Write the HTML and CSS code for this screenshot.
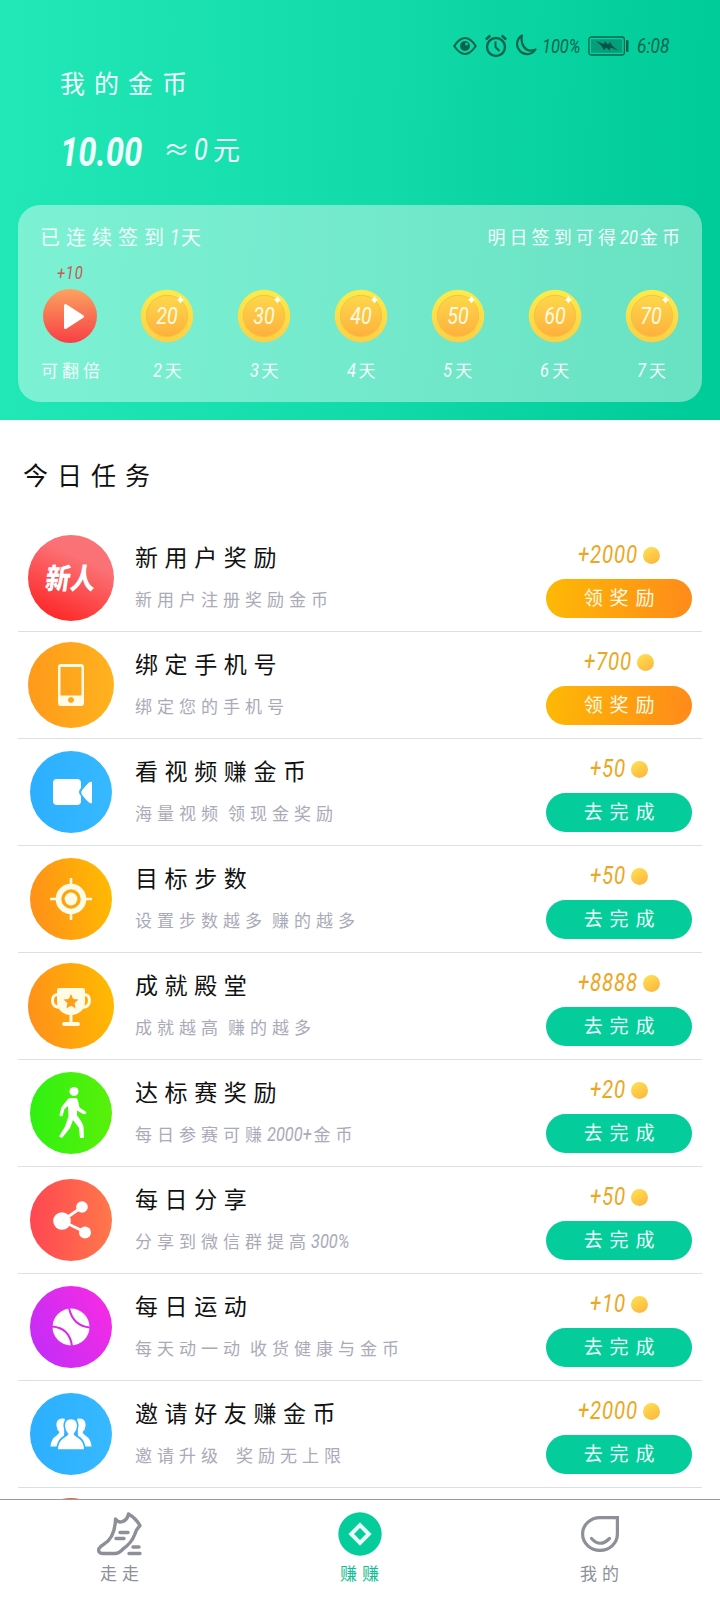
FILE: index.html
```html
<!DOCTYPE html>
<html lang="zh-CN">
<head>
<meta charset="utf-8">
<title>我的金币</title>
<link rel="stylesheet" href="styles.css">
</head>
<body>
<div class="app">
  <svg class="defs" width="0" height="0" aria-hidden="true">
    <defs>
      <linearGradient id="rim" x1="0" y1="0" x2="0" y2="1"><stop offset="0" stop-color="#fbec4a"/><stop offset="1" stop-color="#fdcf47"/></linearGradient>
      <linearGradient id="face" x1="0" y1="0" x2="0" y2="1"><stop offset="0" stop-color="#fdd84b"/><stop offset="1" stop-color="#fdb03d"/></linearGradient>
      <symbol id="coin" viewBox="0 0 54 54">
        <circle cx="27" cy="27" r="26.3" fill="url(#rim)"/>
        <circle cx="27" cy="27" r="20.7" fill="url(#face)" stroke="#f8c23e" stroke-width="1"/>
        <path d="M40.500 7.500q.7 2.600 3 3.300-2.300.7-3 3.300-.7-2.600-3-3.300 2.300-.7 3-3.300z" fill="#fff" stroke="#fff" stroke-width=".8"/>
      </symbol>
    </defs>
  </svg>
  <header class="hero">
    <div class="status">
      <svg class="eye" width="24" height="18" viewBox="0 0 24 18"><path d="M1.200 9Q12-7 22.800 9 12 25 1.200 9z" fill="none" stroke="currentColor" stroke-width="2"/><circle cx="12" cy="9" r="5" fill="currentColor"/><circle cx="13.500" cy="7" r="1.500" fill="#09c493"/></svg>
      <svg class="alarm" width="22" height="24" viewBox="0 0 22 24" fill="none" stroke="currentColor"><circle cx="11" cy="13" r="9" stroke-width="2.400"/><path d="M10.500 7.500V13l4 4" stroke-width="2"/><path d="M.8 5.500 5.300 1.500M21.200 5.500l-4.500-4" stroke-width="2.400"/></svg>
      <svg class="moon" width="23" height="23" viewBox="0 0 23 23"><path d="M8 1.500A10 10 0 1 0 21.500 15.500Q14 18.500 10 13 6.500 8 8 1.500z" fill="none" stroke="currentColor" stroke-width="2.200" stroke-linejoin="round"/></svg>
      <span class="pct"><span class="num">100%</span></span>
      <svg class="battery" width="41" height="20" viewBox="0 0 41 20"><rect x=".9" y="1" width="35.500" height="18" rx="2.500" fill="none" stroke="currentColor" stroke-width="1.300"/><rect x="3" y="3.200" width="31.300" height="13.600" fill="#068e70" opacity=".75"/><path d="M8 5l8 3 1-2.500 3 3 2-2.500 2 3.500 6 5-7.500-3-1 3-3-3-2.500 2.500-2.500-4z" fill="#075446"/><rect x="38" y="4" width="2.500" height="12" rx="1" fill="currentColor"/></svg>
      <span class="time"><span class="num">6:08</span></span>
    </div>
    <h1 class="heading">我的金币</h1>
    <div class="balance"><div class="amount"><strong class="num">10.00</strong></div><div class="worth">≈<span class="num n1">0</span>元</div></div>
    <section class="checkin">
      <div class="checkin-top"><span class="streak">已连续签到<i class="num n1">1</i>天</span><span class="tomorrow">明日签到可得<i class="num n2">20</i>金币</span></div>
      <div class="days">
        <div class="day"><span class="bonus"><span class="num">+10</span></span>
          <svg class="play" width="54" height="54" viewBox="0 0 54 54"><defs><linearGradient id="pg" x1="0" y1="0" x2="0" y2="1"><stop offset="0" stop-color="#fba35f"/><stop offset="1" stop-color="#f83f45"/></linearGradient></defs><circle cx="27" cy="27" r="27" fill="url(#pg)"/><path d="M22.500 16.500v22l17-11z" fill="#fff" stroke="#fff" stroke-width="3" stroke-linejoin="round"/></svg>
          <span class="day-label wide">可翻倍</span></div>
        <div class="day"><span class="bonus"></span><div class="coin"><svg width="54" height="54"><use href="#coin"/></svg><b class="num">20</b></div><span class="day-label"><i class="num n1">2</i>天</span></div>
        <div class="day"><span class="bonus"></span><div class="coin"><svg width="54" height="54"><use href="#coin"/></svg><b class="num">30</b></div><span class="day-label"><i class="num n1">3</i>天</span></div>
        <div class="day"><span class="bonus"></span><div class="coin"><svg width="54" height="54"><use href="#coin"/></svg><b class="num">40</b></div><span class="day-label"><i class="num n1">4</i>天</span></div>
        <div class="day"><span class="bonus"></span><div class="coin"><svg width="54" height="54"><use href="#coin"/></svg><b class="num">50</b></div><span class="day-label"><i class="num n1">5</i>天</span></div>
        <div class="day"><span class="bonus"></span><div class="coin"><svg width="54" height="54"><use href="#coin"/></svg><b class="num">60</b></div><span class="day-label"><i class="num n1">6</i>天</span></div>
        <div class="day"><span class="bonus"></span><div class="coin"><svg width="54" height="54"><use href="#coin"/></svg><b class="num">70</b></div><span class="day-label"><i class="num n1">7</i>天</span></div>
      </div>
    </section>
  </header>

  <main class="tasks">
    <h2 class="section-title">今日任务</h2>
    <div class="list">
      <article class="task">
        <div class="badge large red"><span class="newbie">新人</span></div>
        <div class="info"><h3>新用户奖励</h3><p>新用户注册奖励金币</p></div>
        <div class="action"><div class="reward"><span class="num n5">+2000</span><i class="dot"></i></div><button class="btn claim">领奖励</button></div>
      </article>
      <article class="task">
        <div class="badge large amber"><svg width="26" height="42" viewBox="0 0 26 42"><path fill-rule="evenodd" d="M3 0h20a3 3 0 0 1 3 3v36a3 3 0 0 1-3 3H3a3 3 0 0 1-3-3V3a3 3 0 0 1 3-3zM2.500 3v28.500h21V3zM13 33a3 3 0 1 0 .01 0z" fill="#fffbe6"/></svg></div>
        <div class="info"><h3>绑定手机号</h3><p>绑定您的手机号</p></div>
        <div class="action"><div class="reward"><span class="num n4">+700</span><i class="dot"></i></div><button class="btn claim">领奖励</button></div>
      </article>
      <article class="task">
        <div class="badge blue"><svg class="camera" width="40" height="26" viewBox="0 0 40 26" fill="#fff"><path d="M4 0h20q4 0 4 4v5q-4 4 0 8v5q0 4-4 4H4q-4 0-4-4V4q0-4 4-4z"/><path d="M39 3v21q-1.500.7-3-.5-3-2.500-6-6.500-3.500-3.500 0-7 3-3.500 6-6.500 1.500-1.200 3-.5z"/></svg></div>
        <div class="info"><h3>看视频赚金币</h3><p>海量视频<i class="gap"></i>领现金奖励</p></div>
        <div class="action"><div class="reward"><span class="num n3">+50</span><i class="dot"></i></div><button class="btn">去完成</button></div>
      </article>
      <article class="task">
        <div class="badge orange"><svg width="42" height="42" viewBox="0 0 42 42"><circle cx="21" cy="21" r="12.500" fill="none" stroke="#fffbe6" stroke-width="5.600"/><circle cx="21" cy="21" r="6.400" fill="#fffbe6"/><path d="M21 1v6M21 35v6M1 21h6M35 21h6" stroke="#fffbe6" stroke-width="2.600" stroke-linecap="round"/></svg></div>
        <div class="info"><h3>目标步数</h3><p>设置步数越多<i class="gap"></i>赚的越多</p></div>
        <div class="action"><div class="reward"><span class="num n3">+50</span><i class="dot"></i></div><button class="btn">去完成</button></div>
      </article>
      <article class="task">
        <div class="badge large orange"><svg class="trophy" width="40" height="40" viewBox="0 0 40 40"><path d="M8 0h24q2 0 2 2v12c0 7-5 12-12.500 13v7H27q2 0 2 2t-2 2H13q-2 0-2-2t2-2h5.500v-7C11 26 6 21 6 14V2q0-2 2-2z" fill="#fffbe6"/><path d="M8 6.500Q1.500 6 1.500 12.500T9 19.500M32 6.500q6.500-.5 6.500 6T31 19.500" fill="none" stroke="#fffbe6" stroke-width="3"/><path d="M20 6l2.200 4.900 5.300.6-3.900 3.600 1 5.200-4.600-2.600-4.600 2.600 1-5.200-3.900-3.600 5.300-.6z" fill="#ff9d14"/></svg></div>
        <div class="info"><h3>成就殿堂</h3><p>成就越高<i class="gap"></i>赚的越多</p></div>
        <div class="action"><div class="reward"><span class="num n5">+8888</span><i class="dot"></i></div><button class="btn">去完成</button></div>
      </article>
      <article class="task">
        <div class="badge green"><svg class="walker" width="28" height="52" viewBox="0 0 28 52"><circle cx="15" cy="4.500" r="4.500" fill="#fff"/><path d="M8.500 12.500q1-1.500 3-1.500h5q2 0 2.500 2.500l1.500 7 6 4q1.500 1 .5 2t-3 .5L18 23.500v5q5 6 6.500 11l.5 11.500h-4L20 41l-6-8-3 8-8 10-3-1.500 6-10L9.500 29l-.5-10-3.500 3-2 7q-3 1-3-1l2-8z" fill="#fff"/></svg></div>
        <div class="info"><h3>达标赛奖励</h3><p>每日参赛可赚<i class="num n5">2000+</i>金币</p></div>
        <div class="action"><div class="reward"><span class="num n3">+20</span><i class="dot"></i></div><button class="btn">去完成</button></div>
      </article>
      <article class="task">
        <div class="badge coral"><svg class="share" width="38" height="38" viewBox="0 0 38 38"><path d="M29 6 9 20l23 11" fill="none" stroke="#fff" stroke-width="2.800"/><circle cx="9" cy="20" r="8.800" fill="#fff"/><circle cx="29" cy="6" r="5.800" fill="#fff"/><circle cx="32" cy="31.500" r="6" fill="#fff"/></svg></div>
        <div class="info"><h3>每日分享</h3><p>分享到微信群提高<i class="num n4">300%</i></p></div>
        <div class="action"><div class="reward"><span class="num n3">+50</span><i class="dot"></i></div><button class="btn">去完成</button></div>
      </article>
      <article class="task">
        <div class="badge purple"><svg width="38" height="38" viewBox="0 0 38 38"><circle cx="19" cy="19" r="18.500" fill="#fff"/><path d="M17 0q4 18 21 19.500M0 18.500q18 1.500 20 20" fill="none" stroke="#d82be9" stroke-width="2"/></svg></div>
        <div class="info"><h3>每日运动</h3><p>每天动一动<i class="gap"></i>收货健康与金币</p></div>
        <div class="action"><div class="reward"><span class="num n3">+10</span><i class="dot"></i></div><button class="btn">去完成</button></div>
      </article>
      <article class="task">
        <div class="badge blue"><svg width="42" height="32" viewBox="0 0 42 32" fill="#fff"><path d="M15 1C8-1 6 4 6.500 8q.5 4 3 6-.5 2-3.500 4Q1 21 .5 28.500h7Q8 21 14 18z"/><path d="M27 1c7-2 9 3 8.500 7q-.5 4-3 6 .5 2 3.500 4 5 3 5.500 10.500h-7Q34 21 28 18z"/><path d="M21 .5c5.500 0 7 4 6.700 8-.2 3.500-1.700 6-3.200 7.500.5 1.500 2 2 4.500 3.500Q34.500 23 35 32H7q.5-9 6-12.500c2.500-1.500 4-2 4.500-3.500-1.500-1.500-3-4-3.200-7.500-.3-4 1.200-8 6.700-8z" stroke="#2fb2ff" stroke-width="1.600"/></svg></div>
        <div class="info"><h3>邀请好友赚金币</h3><p>邀请升级<i class="gap double"></i>奖励无上限</p></div>
        <div class="action"><div class="reward"><span class="num n5">+2000</span><i class="dot"></i></div><button class="btn">去完成</button></div>
      </article>
      <article class="task partial"><div class="badge rust"></div></article>
    </div>
  </main>

  <nav class="tabs">
    <a class="tab"><svg class="shoe" width="46" height="44" viewBox="0 0 46 44" fill="none" stroke="currentColor" stroke-width="3.400" stroke-linecap="round" stroke-linejoin="round"><path d="M18.500 7q3 4 7 2.500 4.500-1 6-7.500 7 4 11.500 11.500-4 4-5.500 9.500-3 8-11.500 14-4 4.500-8 4.500H5.500q-5-.5-3.500-5 1-2 4.500-4Q18 26 18.500 7z"/><path d="M23 20.500h8M19 26.500h8M36 35h6M32 41.500h11"/></svg><span>走走</span></a>
    <a class="tab active"><svg width="44" height="44" viewBox="0 0 44 44"><circle cx="22" cy="22" r="21.700" fill="#04cd9b"/><path d="M22 13.200 30.800 22 22 30.800 13.200 22z" fill="none" stroke="#e9fff8" stroke-width="4"/></svg><span>赚赚</span></a>
    <a class="tab"><svg class="face" width="40" height="38" viewBox="0 0 40 38" fill="none" stroke="currentColor" stroke-width="3.200"><path d="M20 2.600h17.400V19A17.400 16.400 0 1 1 20 2.600z"/><path d="M11.500 23.500q8.500 9.500 18 0" stroke-linecap="round"/></svg><span>我的</span></a>
  </nav>
</div>
</body>
</html>
```
FILE: styles.css
```css
* { box-sizing: border-box; }
body { margin: 0; background: #fff; font-family: "Noto Sans CJK SC", sans-serif; font-weight: 400; }
h1, h2, h3, p { margin: 0; font-weight: 400; }
.app { width: 720px; height: 1600px; overflow: hidden; display: flex; flex-direction: column; background: #fff; }
.defs { display: block; flex: none; height: 0; }

/* Condensed slanted numerals; n1-n5 give back the width the condensing frees */
.num { display: inline-block; font-family: Roboto, "Liberation Sans", sans-serif; font-style: italic; font-weight: 400; letter-spacing: 0; line-height: 1; transform: scaleX(.82); transform-origin: 0 50%; }
.n1 { margin-right: -.1em; }
.n2 { margin-right: -.2em; }
.n3 { margin-right: -.3em; }
.n4 { margin-right: -.4em; }
.n5 { margin-right: -.5em; }

/* Header */
.hero { flex: none; height: 420px; padding: 33px 18px 0; color: #f2fffb; background: linear-gradient(92deg, #22e8b7 0%, #15dcab 45%, #00cc99 96%); }
.status { height: 26px; padding-right: 31px; display: flex; align-items: center; justify-content: flex-end; color: #08644f; }
.alarm { margin-left: 8px; margin-top: -1px; }
.moon { margin-left: 7px; margin-top: -1px; }
.pct { width: 41px; margin-left: 5px; font-size: 20px; white-space: nowrap; }
.battery { margin-left: 5px; }
.time { width: 34px; margin-left: 8px; font-size: 21px; }
.status .num { display: block; }
.heading { height: 40px; margin: 4px 0 0 42px; font-size: 25px; line-height: 38px; letter-spacing: 9px; }
.balance { height: 48px; margin: 22px 0 0 42px; display: flex; align-items: center; }
.amount { width: 103px; font-size: 40px; line-height: 46px; }
.amount .num { font-weight: 700; }
.worth { font-size: 27px; line-height: 48px; }
.worth .num { margin-left: 4px; margin-right: 2px; font-size: 31px; }
.checkin { height: 197px; margin-top: 32px; padding: 14px 2px 0 4px; border-radius: 22px; background: rgba(255, 255, 255, .41); }
.checkin-top { height: 34px; padding: 0 20px 0 18px; display: flex; justify-content: space-between; align-items: center; }
.streak { font-size: 20px; letter-spacing: 6px; }
.streak .num { margin-right: -1px; font-size: 22px; }
.tomorrow { margin-right: -4px; font-size: 18px; letter-spacing: 4.100px; }
.tomorrow .num { margin-right: -2px; font-size: 20px; }
.days { display: grid; grid-template-columns: repeat(7, 1fr); }
.day { display: flex; flex-direction: column; align-items: center; white-space: nowrap; }
.bonus { height: 22px; margin: 8px 0 6px; color: #c75b50; font-size: 18px; line-height: 20px; }
.bonus .num { letter-spacing: 1px; transform-origin: 50% 50%; }
.play { display: block; }
.coin { width: 54px; height: 54px; display: grid; place-items: center; }
.coin > * { grid-area: 1 / 1; }
.coin .num { font-size: 24px; color: #fffbe0; transform-origin: 50% 50%; }
.day-label { margin-top: 13px; font-size: 17px; line-height: 28px; }
.day-label .num { margin-right: 1px; font-size: 20px; }
.day-label.wide { letter-spacing: 4px; margin-right: -4px; }

/* Tasks */
.tasks { flex: 1; min-height: 0; overflow: hidden; padding: 32px 18px 0; }
.section-title { height: 44px; margin-left: 5px; font-size: 25px; line-height: 44px; letter-spacing: 9px; color: #111; }
.list { padding-top: 29px; }
.task { height: 107px; padding-right: 10px; border-bottom: 1px solid #dedfe0; display: flex; align-items: center; }
.badge { flex: none; width: 82px; height: 82px; margin: 0 16px 0 12px; border-radius: 50%; display: flex; align-items: center; justify-content: center; }
.badge.large { width: 86px; height: 86px; margin: 0 14px 0 10px; }
.red { background: linear-gradient(25deg, #fd2929 12%, #fb7276 70%); }
.amber { background: linear-gradient(90deg, #ff9a1a, #ffb21f); }
.orange { background: linear-gradient(80deg, #ff8d1b, #ffbd00); }
.blue { background: linear-gradient(90deg, #2cafff, #36b9ff); }
.green { background: linear-gradient(90deg, #2ff112, #59f00a); }
.coral { background: linear-gradient(90deg, #ff4652, #ff784b); }
.purple { background: linear-gradient(60deg, #bd2dfa, #fb2be2); }
.rust { background: #ec6130; }
.newbie { margin-top: -5px; color: #fff; font-size: 25px; font-weight: 900; line-height: 34px; transform: skewX(-8deg) scaleY(1.15); }
.camera { margin-left: 4px; }
.trophy { margin-top: 4px; }
.walker { margin-left: 4px; }
.share { margin-left: 2px; }
.info { flex: 1; height: 100%; padding: 13px 0 0 7px; }
.info h3 { font-size: 23px; line-height: 36px; letter-spacing: 6.600px; color: #111; }
.info p { margin-top: 11px; font-size: 17px; line-height: 28px; letter-spacing: 5px; color: #aaaab8; white-space: nowrap; }
.info .num { font-size: 20px; }
.info .n5 { margin-right: -.4em; }
.gap { display: inline-block; width: 5px; }
.gap.double { width: 13px; }
.action { width: 146px; height: 100%; padding-top: 14px; }
.reward { height: 32px; display: flex; align-items: center; justify-content: center; gap: 5px; color: #eca722; }
.reward .num { font-size: 25px; line-height: 32px; letter-spacing: 1px; }
.dot { width: 17px; height: 17px; border-radius: 50%; background: linear-gradient(150deg, #fde250 5%, #fdbb42 80%); }
.btn { display: block; width: 146px; height: 39px; margin-top: 8px; padding: 0 0 4px 7px; border: 0; border-radius: 20px; background: #04cd9b; color: #edfff9; font: 400 19px/35px "Noto Sans CJK SC", sans-serif; letter-spacing: 6.800px; }
.btn.claim { background: linear-gradient(95deg, #fdb905, #ff8a1a); color: #fffbe6; }
.task.partial { align-items: flex-start; padding-top: 10px; border: 0; }

/* Bottom tabs */
.tabs { flex: none; height: 101px; border-top: 1px solid #9b9b9b; display: grid; grid-template-columns: repeat(3, 1fr); background: #fff; }
.tab { padding-top: 12px; display: flex; flex-direction: column; align-items: center; color: #8d9098; }
.tab svg { flex: none; height: 44px; }
.tab span { margin: 3px -4px 0 0; font-size: 17px; line-height: 28px; letter-spacing: 5px; }
.tab.active { color: #12bd92; }
```
